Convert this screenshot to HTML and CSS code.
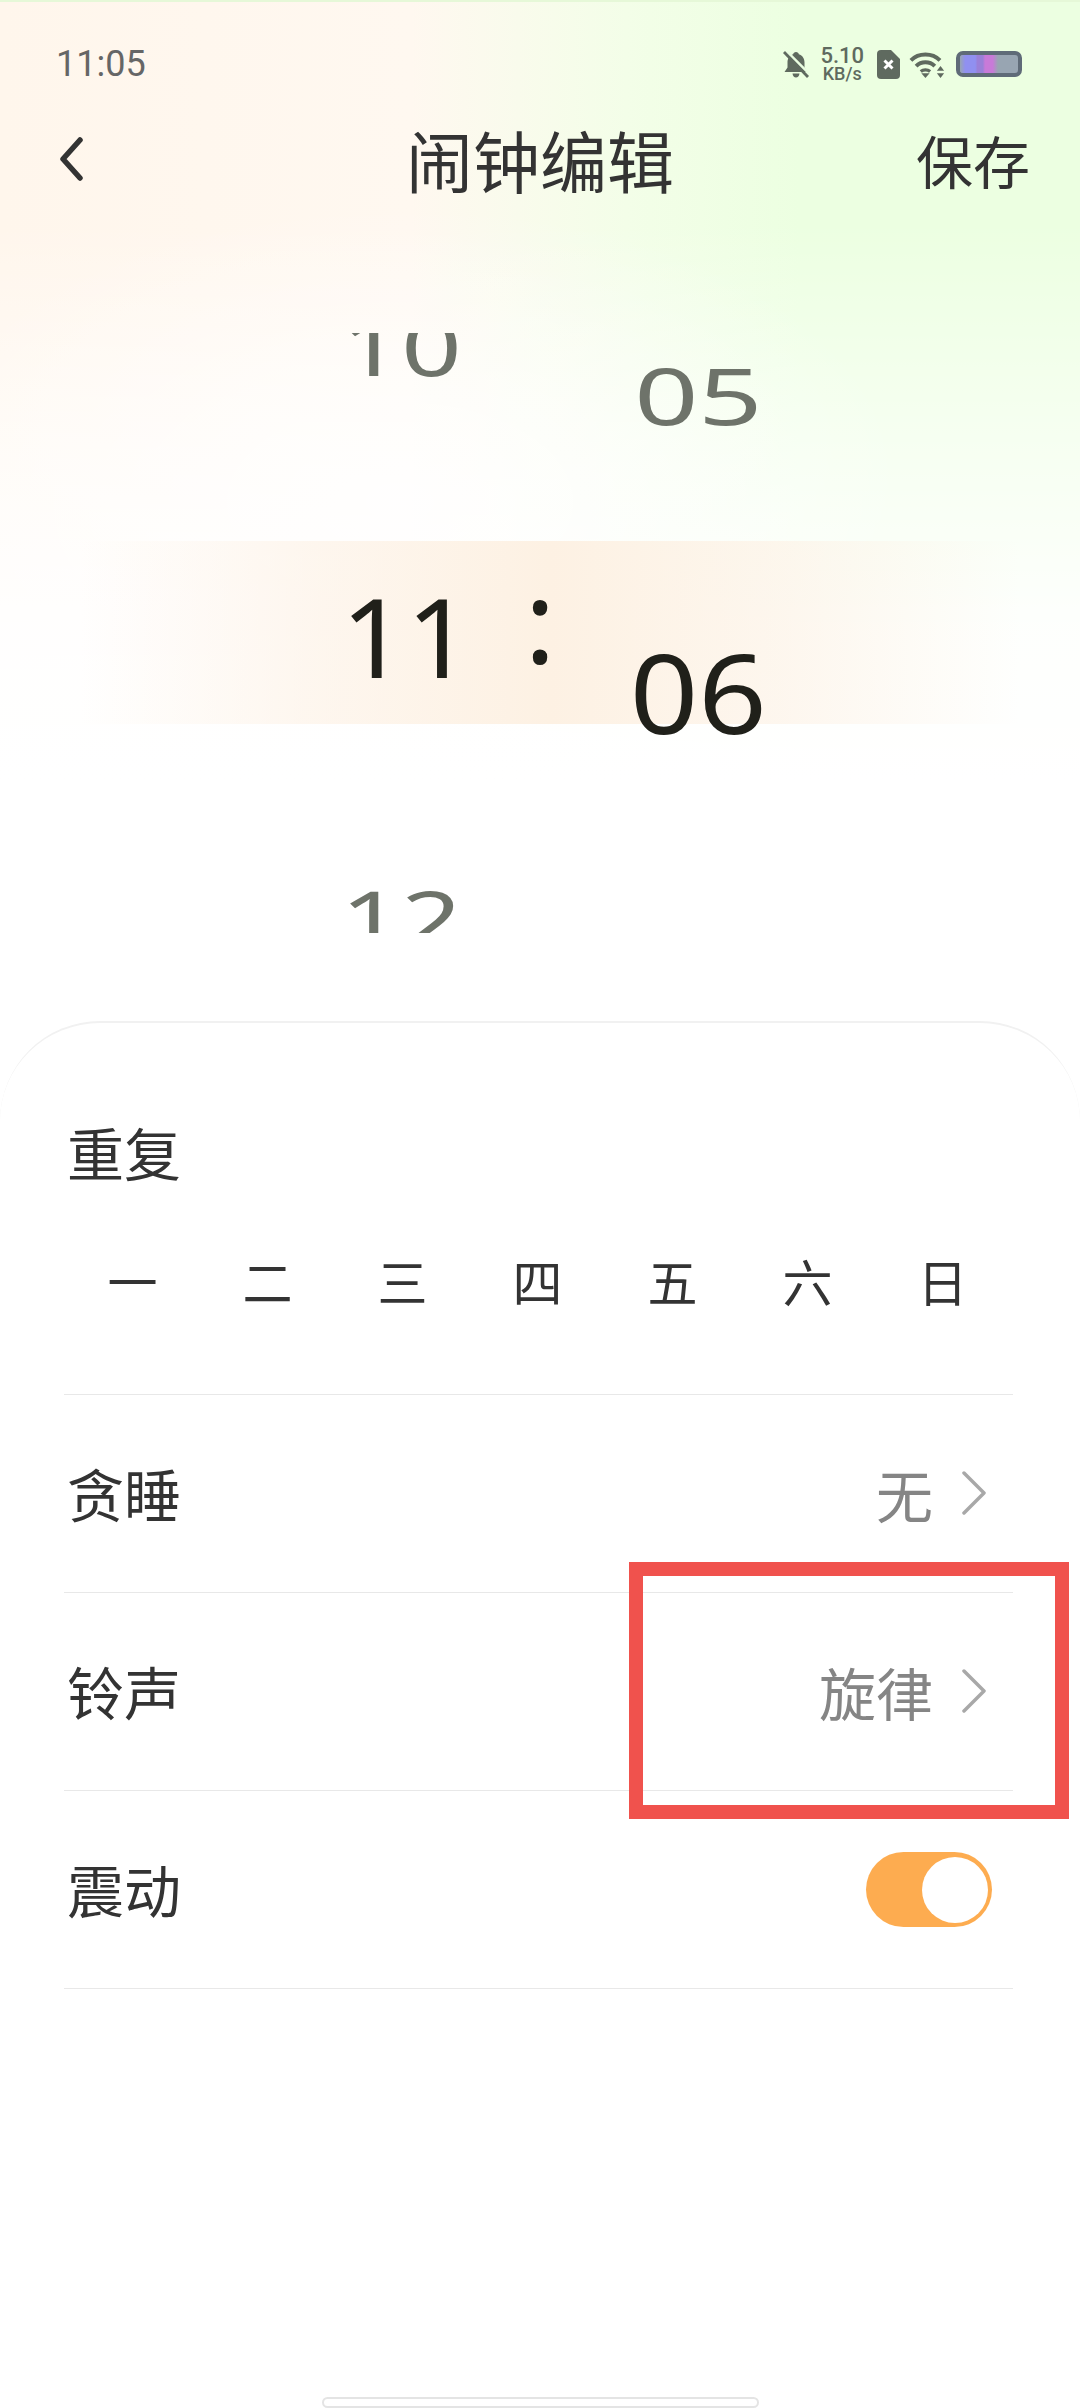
FILE: index.html
```html
<!DOCTYPE html>
<html lang="zh">
<head>
<meta charset="utf-8">
<title>闹钟编辑</title>
<link rel="stylesheet" href="styles.css">
</head>
<body>
<div class="page">
  <header class="status">
    <span class="clock">11:05</span>
    <div class="status-icons">
      <svg class="ic-bell" viewBox="0 0 26 27"><path d="M13 1c1.600 0 2.600 1 2.800 2.200C19.600 4.400 21.500 7.600 21.500 11.500v5l3 4.500H1.500l3-4.500v-5C4.500 7.600 6.400 4.400 10.200 3.200 10.400 2 11.400 1 13 1zM9.500 22.500h7C16.200 25 14.800 26.500 13 26.500S9.800 25 9.500 22.500z" fill="#5f6a5f"/><path d="M4 0.500L27 23.500" stroke="#e9fde0" stroke-width="2.500"/><path d="M1 1L25 26" stroke="#5f6a5f" stroke-width="2.800"/></svg>
      <div class="speed"><span class="speed-num">5.10</span><span class="speed-unit">KB/s</span></div>
      <svg class="ic-sim" viewBox="0 0 23 29"><path d="M4 0h10l9 9v16a4 4 0 0 1-4 4H4a4 4 0 0 1-4-4V4a4 4 0 0 1 4-4z" fill="#5f6a5f"/><path d="M7.500 10.500l8 8M15.500 10.500l-8 8" stroke="#fff" stroke-width="3"/></svg>
      <svg class="ic-wifi" viewBox="0 0 33 26"><g fill="none" stroke="#5f6a5f" stroke-width="3.800"><path d="M1 9C8.500 1.500 21.500 1.500 29 9"/><path d="M6 14.500C11 9.500 19 9.500 24 14.500"/></g><path d="M9.500 18.500c3-2.600 8-2.600 11 0l-2 2.400c-2-1.500-5-1.500-7 0z" fill="#5f6a5f"/><path d="M11 21.500h8L15 26z" fill="#5f6a5f"/><path d="M29.500 14.500l3.500 4.500h-7zM29.500 26L26 21.500h7z" fill="#5f6a5f"/></svg>
      <div class="battery"><span class="battery-fill"></span></div>
    </div>
  </header>

  <nav class="nav">
    <svg class="back" viewBox="0 0 26 44"><path d="M22 3L5 22l17 19" fill="none" stroke="#333" stroke-width="5.500" stroke-linecap="round" stroke-linejoin="round"/></svg>
    <h1 class="title">闹钟编辑</h1>
    <span class="save">保存</span>
  </nav>

  <section class="picker">
    <div class="band"></div>
    <div class="wheel wheel-hours">
      <div class="num">10</div>
      <div class="num num-on">11</div>
      <div class="num">12</div>
    </div>
    <div class="colon">:</div>
    <div class="wheel wheel-minutes">
      <div class="num">05</div>
      <div class="num num-on">06</div>
    </div>
  </section>

  <main class="sheet">
    <section class="repeat">
      <div class="label">重复</div>
      <div class="days">
        <span class="day">一</span><span class="day">二</span><span class="day">三</span><span class="day">四</span><span class="day">五</span><span class="day">六</span><span class="day">日</span>
      </div>
    </section>
    <div class="row">
      <span class="label">贪睡</span>
      <span class="value">无<svg class="chev" viewBox="0 0 24 44"><path d="M2 2l20 20L2 42" fill="none" stroke="#a8a8a8" stroke-width="3.500" stroke-linecap="round" stroke-linejoin="round"/></svg></span>
    </div>
    <div class="row">
      <span class="label">铃声</span>
      <span class="value">旋律<svg class="chev" viewBox="0 0 24 44"><path d="M2 2l20 20L2 42" fill="none" stroke="#a8a8a8" stroke-width="3.500" stroke-linecap="round" stroke-linejoin="round"/></svg></span>
    </div>
    <div class="row">
      <span class="label">震动</span>
      <span class="toggle"><span class="knob"></span></span>
    </div>
    <div class="home"></div>
  </main>

  <div class="highlight"></div>
</div>
</body>
</html>
```
FILE: styles.css
```css
* { box-sizing: border-box; }
html, body { margin: 0; padding: 0; background: #fff; }
body { font-family: "Noto Sans CJK SC", "Noto Sans", sans-serif; color: #333; }

.page {
  position: relative;
  width: 1080px;
  height: 2408px;
  overflow: hidden;
  display: flex;
  flex-direction: column;
  border-top: 2px solid #e6f8d8;
  background:
    radial-gradient(ellipse 520px 300px at 400px 500px, rgba(255, 255, 255, .75) 0, rgba(255, 255, 255, 0) 100%),
    linear-gradient(to bottom, rgba(255, 255, 255, 0) 0, rgba(255, 255, 255, 0) 220px, rgba(255, 255, 255, .55) 440px, rgba(255, 255, 255, .92) 620px, #fff 780px),
    linear-gradient(90deg, #fff6ec 0, #fff8f0 38%, #f3fee8 58%, #ecffe1 74%, #ecffe1 100%);
}

.status {
  height: 90px;
  flex: none;
  padding: 0 58px 0 56px;
  display: flex;
  align-items: center;
  justify-content: space-between;
}
.clock { font: 400 36px/1 Roboto, sans-serif; color: #666; margin-top: 33px; }
.status-icons { display: flex; align-items: center; gap: 13px; margin-top: 34px; }
.ic-bell { width: 26px; height: 27px; margin-right: -2px; }
.ic-sim { width: 23px; height: 29px; }
.ic-wifi { width: 36px; height: 27px; margin-left: -4px; }
.speed { display: flex; flex-direction: column; align-items: center; font-family: Roboto, sans-serif; color: #5f6a5f; font-weight: 500; }
.speed-num { font-size: 22px; line-height: 19px; }
.speed-unit { font-size: 18px; line-height: 17px; }
.battery {
  width: 66px; height: 26px; margin-left: -2px;
  border: 4px solid #5f6b78; border-radius: 7px; background: #98a5b2; overflow: hidden;
}
.battery-fill {
  display: block; width: 38px; height: 100%;
  background: linear-gradient(90deg, #98a5b2 0, #9090f0 14%, #9090f0 40%, #9a80d8 46%, #9a80d8 60%, #c87ad8 66%, #c87ad8 86%, #98a5b2 100%);
}

.nav {
  height: 96px;
  flex: none;
  margin-top: 19px;
  padding: 0 50px 0 58px;
  display: flex;
  align-items: center;
  position: relative;
  justify-content: space-between;
}
.back { width: 26px; height: 44px; }
.title {
  position: absolute;
  left: 0; right: 0;
  margin: 0;
  text-align: center;
  font-size: 67px;
  line-height: 96px;
  font-weight: 400;
  color: #333;
}
.save { font-size: 57px; line-height: 96px; color: #333; }

.picker {
  flex: none;
  height: 814px;
  position: relative;
  display: flex;
  align-items: flex-start;
}
.band {
  position: absolute;
  left: 80px; right: 60px;
  top: 334px;
  height: 183px;
  background: linear-gradient(90deg, rgba(253, 241, 228, 0) 0, rgba(253, 241, 228, .6) 25%, #fdf1e3 50%, rgba(253, 241, 228, .6) 75%, rgba(253, 241, 228, 0) 100%);
}
.wheel {
  position: relative;
  width: 130px;
  height: 600px;
  margin-top: 126px;
  overflow: hidden;
  display: flex;
  flex-direction: column;
  align-items: center;
  gap: 186px;
  font-family: "Noto Sans", sans-serif;
}
.wheel-hours { margin-left: 339px; }
.wheel-minutes { margin-left: 0; padding-top: 12px; gap: 197px; }
.num {
  flex: none;
  height: 100px;
  line-height: 100px;
  font-size: 109px;
  color: #6e736a;
  transform: translateX(-3px) scale(.97, .72);
}
.num-on { color: #20201a; transform: translateX(2px) scale(1.05, 1); }
.wheel-minutes .num { transform: scale(1.03, .72); }
.wheel-minutes .num-on { transform: scale(1.1, 1); }
.wheel-hours .num:first-child { margin-top: -37px; }
.wheel-hours .num-on { position: relative; top: 4px; }
.colon {
  position: relative;
  width: 164px;
  margin-top: 361px;
  text-align: center;
  padding-right: 22px;
  font: 400 116px/100px "Noto Sans", sans-serif;
  color: #20201a;
}

.sheet {
  flex: 1;
  background: #fff;
  border-top: 2px solid #f1f1f1;
  border-radius: 100px 100px 0 0;
  padding: 0 67px 0 64px;
  display: flex;
  flex-direction: column;
}
.repeat { height: 372px; padding-top: 90px; border-bottom: 1px solid #e8e8e8; }
.label { font-size: 57px; line-height: 80px; color: #333; display: block; position: relative; top: -2px; left: 3px; }
.days { display: flex; margin: 52px 0 0 1px; width: 945px; }
.day { flex: 1; text-align: center; font-size: 50px; line-height: 70px; color: #333; }
.row {
  height: 198px;
  display: flex;
  align-items: center;
  justify-content: space-between;
  border-bottom: 1px solid #e8e8e8;
}
.value { display: flex; align-items: center; color: #858585; font-size: 57px; padding-right: 27px; position: relative; top: -1px; }
.chev { width: 24px; height: 44px; margin-left: 29px; }
.toggle {
  width: 126px; height: 75px;
  margin-right: 21px;
  border-radius: 38px;
  background: #fdac50;
  display: flex;
  align-items: center;
  justify-content: flex-end;
  padding-right: 4px;
}
.knob { width: 66px; height: 66px; border-radius: 50%; background: #fff; }
.home {
  margin: auto 0 0 258px;
  width: 437px;
  height: 11px;
  border: 2px solid #e4e4e4;
  border-radius: 6px;
}

.highlight {
  position: absolute;
  left: 629px;
  top: 1560px;
  width: 440px;
  height: 257px;
  border: 14px solid #f0524d;
}
```
